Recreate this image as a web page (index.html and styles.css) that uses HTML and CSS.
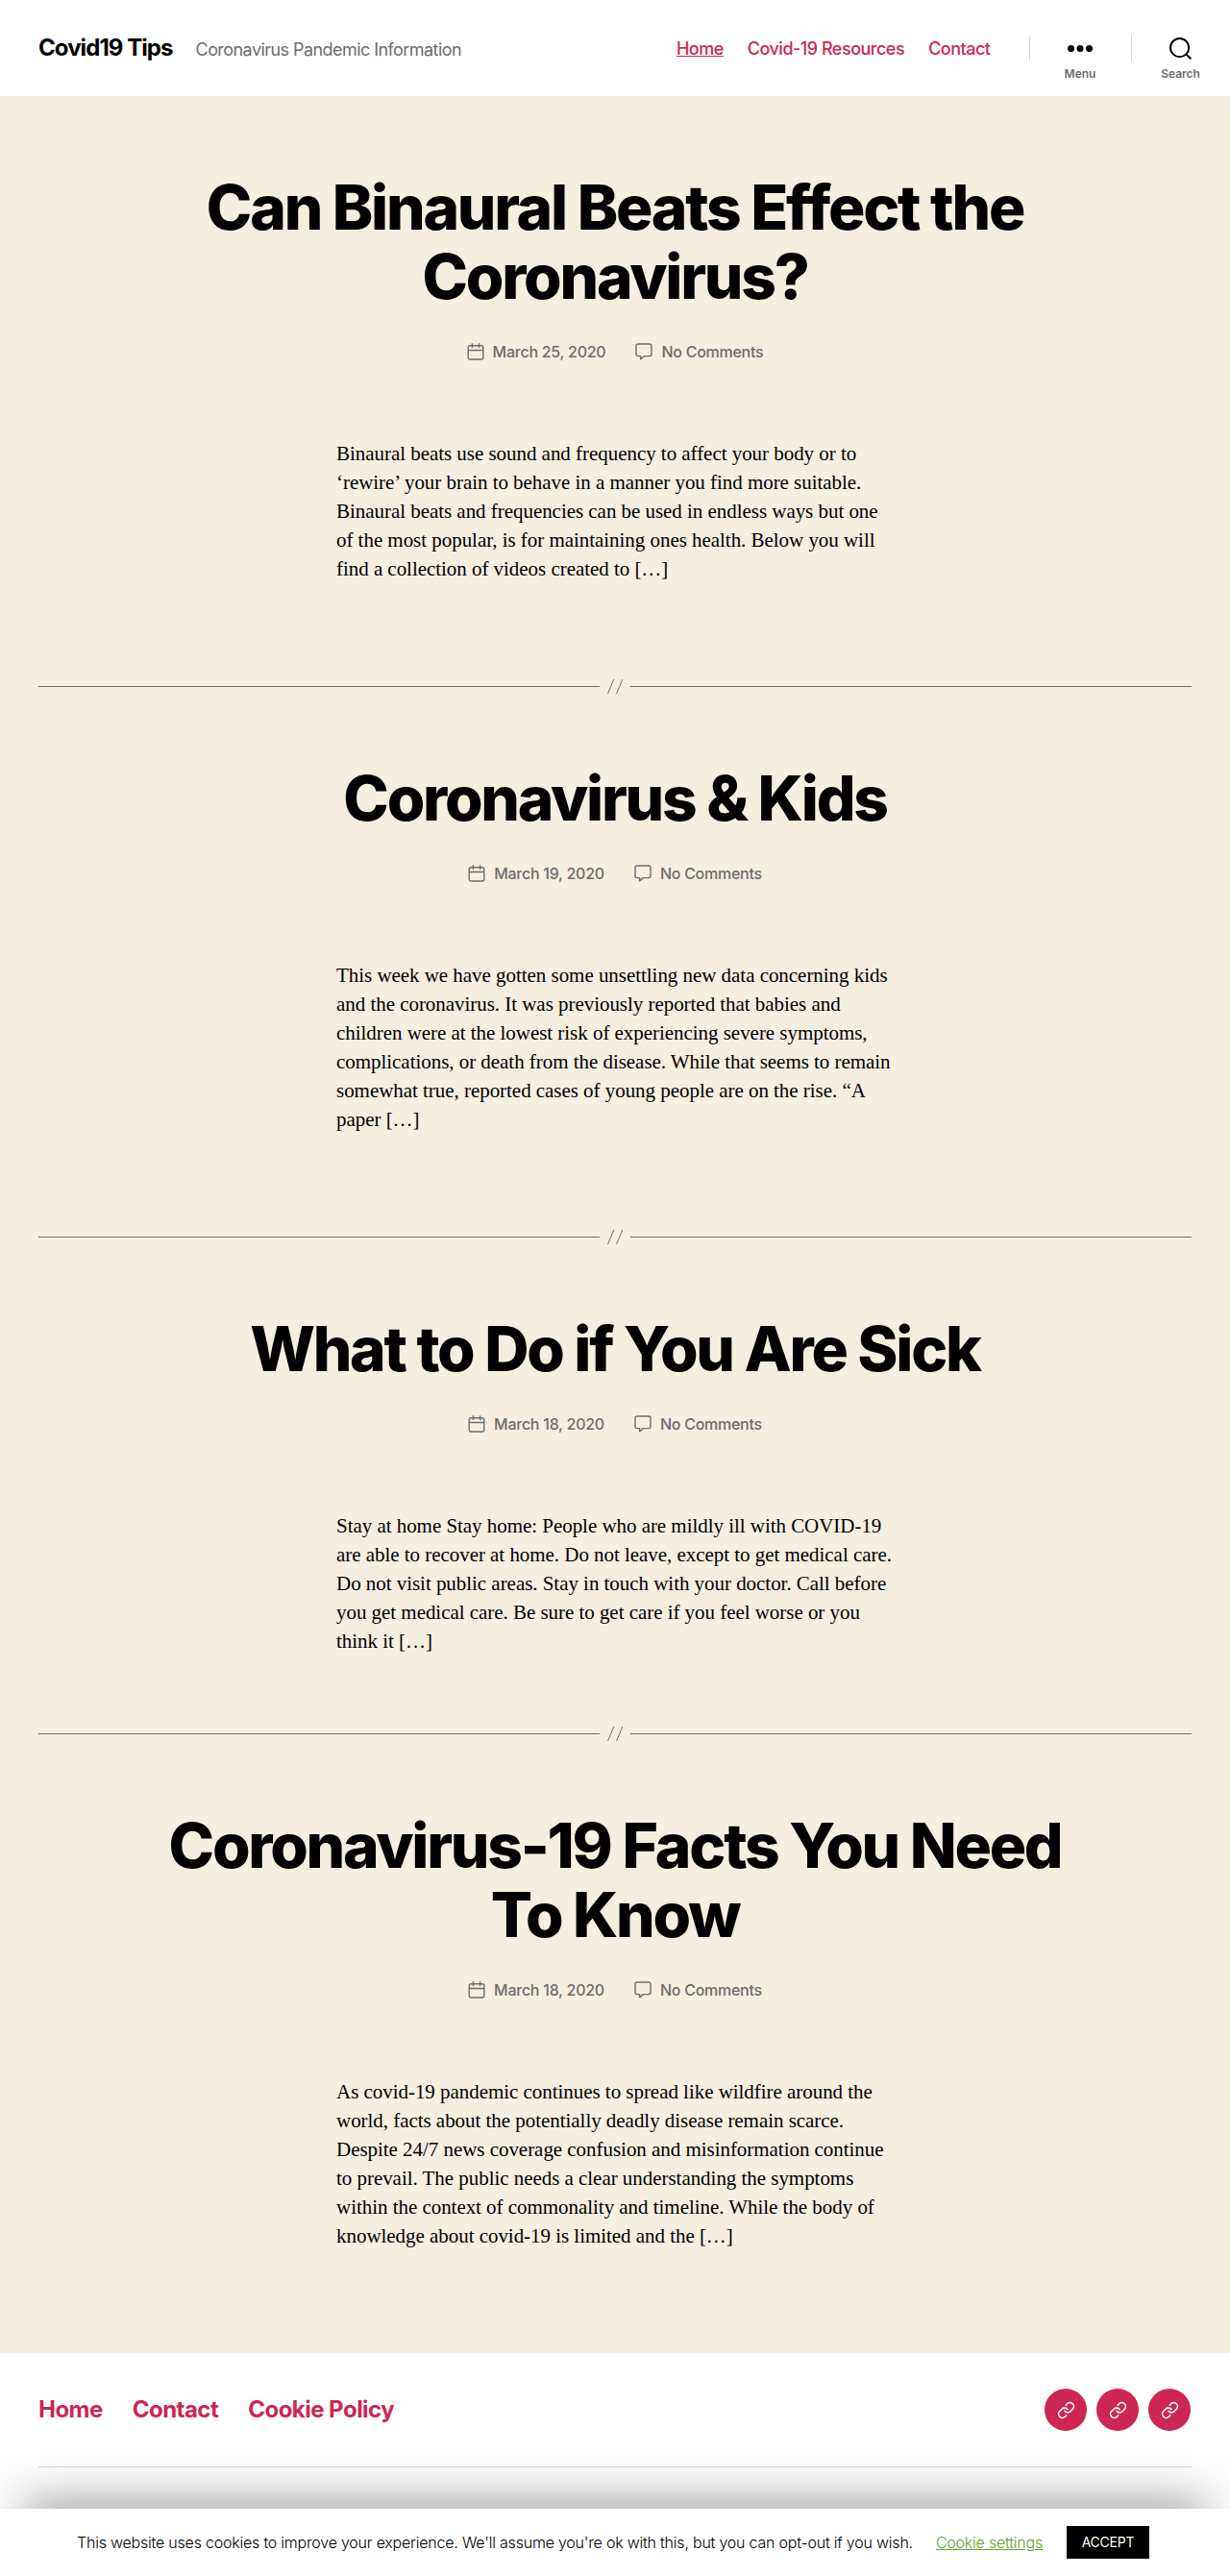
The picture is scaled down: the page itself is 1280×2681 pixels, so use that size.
FILE: index.html
```html
<!DOCTYPE html>
<html lang="en">
<head>
<meta charset="utf-8">
<title>Covid19 Tips</title>
<link rel="stylesheet" href="styles.css">
</head>
<body>
<svg class="sprite" aria-hidden="true">
  <symbol id="calendar" viewBox="0 0 18 18"><g fill="none" stroke="currentColor" stroke-width="1.4"><rect x="1.2" y="2.7" width="15.6" height="14.3" rx="2"/><path d="M1.2 7.5h15.6M5.4 0.3v4.6M12.6 0.3v4.6"/></g></symbol>
  <symbol id="comment" viewBox="0 0 18 18"><path fill="none" stroke="currentColor" stroke-width="1.4" stroke-linejoin="round" d="M3 1h12a2 2 0 0 1 2 2v8.6a2 2 0 0 1-2 2H9.4L5.7 16.8v-3.2H3a2 2 0 0 1-2-2V3a2 2 0 0 1 2-2z"/></symbol>
  <symbol id="link" viewBox="0 0 24 24"><g fill="none" stroke="currentColor" stroke-width="2" stroke-linecap="round" stroke-linejoin="round"><path d="M10 13a5 5 0 0 0 7.54.54l3-3a5 5 0 0 0-7.07-7.07l-1.72 1.71"/><path d="M14 11a5 5 0 0 0-7.54-.54l-3 3a5 5 0 0 0 7.07 7.07l1.71-1.71"/></g></symbol>
</svg>

<header class="site-header">
  <div class="titles">
    <a class="site-title" href="#">Covid19 Tips</a>
    <div class="site-description">Coronavirus Pandemic Information</div>
  </div>
  <div class="header-nav">
    <nav class="primary-menu">
      <a class="current" href="#">Home</a>
      <a href="#">Covid-19 Resources</a>
      <a href="#">Contact</a>
    </nav>
    <button class="toggle menu-toggle">
      <svg width="26" height="7" viewBox="0 0 26 7"><circle cx="3.5" cy="3.5" r="3.5"/><circle cx="13" cy="3.5" r="3.5"/><circle cx="22.5" cy="3.5" r="3.5"/></svg>
      <span>Menu</span>
    </button>
    <button class="toggle search-toggle">
      <svg width="23" height="23" viewBox="0 0 23 23"><g fill="none" stroke="#000" stroke-width="2"><circle cx="10.6" cy="10.6" r="9.6"/><path d="M17.3 17.3l5 5"/></g></svg>
      <span>Search</span>
    </button>
  </div>
</header>

<main>
  <article class="post first">
    <h2 class="entry-title">Can Binaural Beats Effect the Coronavirus?</h2>
    <ul class="post-meta">
      <li><svg width="18" height="18"><use href="#calendar"/></svg>March 25, 2020</li>
      <li><svg width="18" height="18"><use href="#comment"/></svg>No Comments</li>
    </ul>
    <p class="entry-content">Binaural beats use sound and frequency to affect your body or to ‘rewire’ your brain to behave in a manner you find more suitable. Binaural beats and frequencies can be used in endless ways but one of the most popular, is for maintaining ones health. Below you will find a collection of videos created to […]</p>
  </article>
  <div class="separator"><svg width="16" height="15" viewBox="0 0 16 15"><path d="M0.5 15L6.8 0M9.5 15L15.8 0"/></svg></div>
  <article class="post">
    <h2 class="entry-title">Coronavirus &amp; Kids</h2>
    <ul class="post-meta">
      <li><svg width="18" height="18"><use href="#calendar"/></svg>March 19, 2020</li>
      <li><svg width="18" height="18"><use href="#comment"/></svg>No Comments</li>
    </ul>
    <p class="entry-content">This week we have gotten some unsettling new data concerning kids and the coronavirus. It was previously reported that babies and children were at the lowest risk of experiencing severe symptoms, complications, or death from the disease. While that seems to remain somewhat true, reported cases of young people are on the rise. “A paper […]</p>
  </article>
  <div class="separator"><svg width="16" height="15" viewBox="0 0 16 15"><path d="M0.5 15L6.8 0M9.5 15L15.8 0"/></svg></div>
  <article class="post compact">
    <h2 class="entry-title">What to Do if You Are Sick</h2>
    <ul class="post-meta">
      <li><svg width="18" height="18"><use href="#calendar"/></svg>March 18, 2020</li>
      <li><svg width="18" height="18"><use href="#comment"/></svg>No Comments</li>
    </ul>
    <p class="entry-content">Stay at home Stay home: People who are mildly ill with COVID-19 are able to recover at home. Do not leave, except to get medical care. Do not visit public areas. Stay in touch with your doctor. Call before you get medical care. Be sure to get care if you feel worse or you think it […]</p>
  </article>
  <div class="separator"><svg width="16" height="15" viewBox="0 0 16 15"><path d="M0.5 15L6.8 0M9.5 15L15.8 0"/></svg></div>
  <article class="post">
    <h2 class="entry-title">Coronavirus-19 Facts You Need To Know</h2>
    <ul class="post-meta">
      <li><svg width="18" height="18"><use href="#calendar"/></svg>March 18, 2020</li>
      <li><svg width="18" height="18"><use href="#comment"/></svg>No Comments</li>
    </ul>
    <p class="entry-content">As covid-19 pandemic continues to spread like wildfire around the world, facts about the potentially deadly disease remain scarce. Despite 24/7 news coverage confusion and misinformation continue to prevail. The public needs a clear understanding the symptoms within the context of commonality and timeline. While the body of knowledge about covid-19 is limited and the […]</p>
  </article>
</main>

<footer class="footer-top">
  <nav class="footer-menu">
    <a href="#">Home</a>
    <a href="#">Contact</a>
    <a href="#">Cookie Policy</a>
  </nav>
  <div class="social">
    <a href="#" aria-label="Home"><svg width="19" height="19"><use href="#link"/></svg></a>
    <a href="#" aria-label="Contact"><svg width="19" height="19"><use href="#link"/></svg></a>
    <a href="#" aria-label="Cookie Policy"><svg width="19" height="19"><use href="#link"/></svg></a>
  </div>
</footer>

<div class="cookie-bar">
  <span>This website uses cookies to improve your experience. We'll assume you're ok with this, but you can opt-out if you wish.</span>
  <a class="settings" href="#">Cookie settings</a>
  <a class="accept" href="#">ACCEPT</a>
</div>
</body>
</html>
```

FILE: styles.css
```css
* {
  box-sizing: border-box;
}

body {
  margin: 0;
  height: 2681px;
  display: flex;
  flex-direction: column;
  overflow: hidden;
  background: #fff;
  color: #000;
  font-family: Inter, sans-serif;
  font-size: 18px;
  letter-spacing: -0.015em;
}

a {
  color: #cd2653;
  text-decoration: none;
}

.sprite {
  position: absolute;
  width: 0;
  height: 0;
}

.site-header {
  height: 100px;
  padding-left: 40px;
  display: flex;
  align-items: center;
  justify-content: space-between;
}

.titles {
  display: flex;
  align-items: baseline;
  gap: 24px;
  padding-bottom: 2px;
}

.site-title {
  color: #000;
  font-size: 24px;
  font-weight: 700;
  letter-spacing: -0.039em;
}

.site-description {
  color: #6d6d6d;
  font-weight: 400;
  letter-spacing: -0.0311em;
}

.header-nav {
  display: flex;
  align-items: center;
}

.primary-menu {
  display: flex;
  gap: 25px;
  margin-right: 40.5px;
  font-weight: 500;
  letter-spacing: -0.0277em;
}

.current {
  text-decoration: underline;
}

.toggle {
  height: 100px;
  padding: 0;
  border: 0;
  background: none;
  font: inherit;
  display: grid;
  grid-template-rows: 51px 1fr;
  align-items: center;
  justify-items: center;
  position: relative;
  padding-top: 25px;
}

.toggle::before {
  content: "";
  position: absolute;
  left: 0;
  top: 37px;
  width: 1px;
  height: 27px;
  background: #dcd7ca;
}

.toggle span {
  align-self: start;
  margin-top: -7px;
  color: #6d6d6d;
  font-size: 12px;
  line-height: 15px;
  font-weight: 600;
  letter-spacing: 0;
}

.menu-toggle {
  width: 106px;
}

.search-toggle {
  width: 103px;
}

main {
  height: 2349px;
  flex-shrink: 0;
  background: #f5efe0;
}

.post {
  padding: 73px 0 100px;
}

.post.first {
  padding-top: 80px;
}

.post.compact {
  padding-bottom: 74px;
}

.entry-title {
  width: 1000px;
  margin: 0 auto;
  font-size: 64px;
  font-weight: 800;
  line-height: 72px;
  letter-spacing: -0.035em;
  text-align: center;
}

.post-meta {
  display: flex;
  justify-content: center;
  gap: 31px;
  margin: 30px 0 0;
  padding: 0;
  list-style: none;
  color: #6d6d6d;
  font-size: 16px;
  font-weight: 500;
  line-height: 24px;
  letter-spacing: -0.016em;
}

.post-meta li {
  display: flex;
  align-items: center;
  gap: 9px;
}

.entry-content {
  width: 580px;
  margin: 79px auto 0;
  font-family: "Liberation Serif", serif;
  font-size: 21px;
  line-height: 30px;
  letter-spacing: -0.04px;
}

.separator {
  display: flex;
  align-items: center;
  justify-content: space-between;
  height: 15px;
  margin: 0 40px;
}

.separator::before,
.separator::after {
  content: "";
  width: 584px;
  height: 1px;
  background: #6d6d6d;
}

.separator path {
  fill: none;
  stroke: #6d6d6d;
}

.footer-top {
  display: flex;
  align-items: center;
  justify-content: space-between;
  height: 119px;
  margin: 0 40px;
  border-bottom: 1px solid #dcd7ca;
}

.footer-menu {
  display: flex;
  gap: 31px;
  padding-bottom: 2px;
  font-size: 24px;
  font-weight: 700;
  letter-spacing: -0.022em;
}

.social {
  display: flex;
  gap: 10px;
  margin-right: 1px;
}

.social a {
  display: flex;
  align-items: center;
  justify-content: center;
  width: 44px;
  height: 44px;
  border-radius: 50%;
  background: #cd2653;
  color: #fff;
}

.cookie-bar {
  display: flex;
  align-items: center;
  justify-content: center;
  height: 70px;
  margin-top: auto;
  padding-right: 4px;
  background: #fff;
  box-shadow: 0 -25px 50px -25px rgba(0, 0, 0, 0.77);
  font-size: 16px;
  font-weight: 300;
  letter-spacing: -0.0135em;
}

.cookie-bar span,
.settings {
  padding-bottom: 1px;
}

.settings {
  margin: 0 25px 0 24px;
  color: #61a229;
  text-decoration: underline;
}

.accept {
  width: 86px;
  height: 34px;
  background: #000;
  color: #fff;
  font-size: 14px;
  font-weight: 400;
  line-height: 34px;
  text-align: center;
}
```
